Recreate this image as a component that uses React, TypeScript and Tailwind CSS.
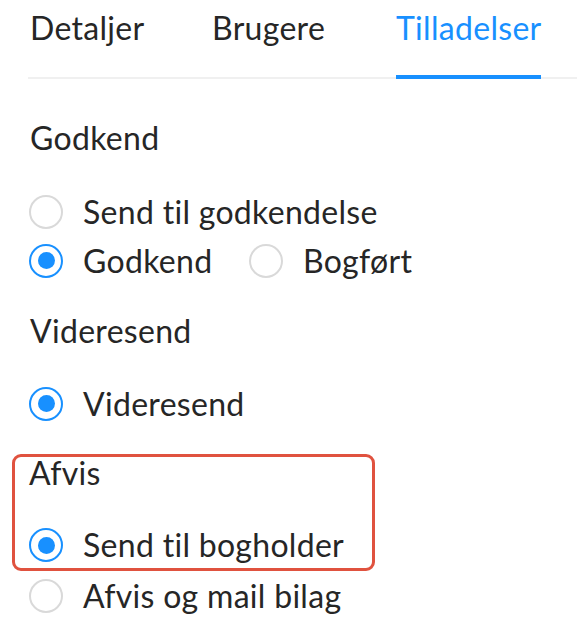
import React from "react";

function Radio({ checked, label, h = "h-[49px]" }: { checked?: boolean; label: string; h?: string }) {
  return (
    <div className={"flex items-center " + h}>
      <span
        className={
          "flex items-center justify-center w-[34px] h-[34px] rounded-full border-2 bg-white shrink-0 " +
          (checked ? "border-[#1890ff]" : "border-[#d9d9d9]")
        }
      >
        {checked && <span className="w-[17px] h-[17px] rounded-full bg-[#1890ff]" />}
      </span>
      <span className="ml-[20px] whitespace-nowrap">{label}</span>
    </div>
  );
}

export default function App() {
  return (
    <div
      className="w-[577px] h-[642px] bg-white text-[#262626] text-[32px] leading-[40px] tracking-[0.3px] overflow-hidden"
      style={{ fontFamily: "Lato, 'Noto Sans', sans-serif" }}
    >
      <div className="ml-[28px] flex border-b-2 border-[#f0f0f0] h-[79px]">
        <div className="pt-[8px] pl-[2px] w-[184px]">Detaljer</div>
        <div className="pt-[8px] w-[184px]">Brugere</div>
        <div className="pt-[8px] text-[#1890ff] border-b-[4px] border-[#1890ff] mb-[-2px] w-[145px] whitespace-nowrap">
          Tilladelser
        </div>
      </div>
      <div className="pl-[30px] pt-[39px]">Godkend</div>
      <div className="pl-[29px] pt-[29px]">
        <Radio label="Send til godkendelse" />
        <div className="flex">
          <div className="w-[220px]">
            <Radio checked label="Godkend" />
          </div>
          <Radio label="Bogført" />
        </div>
      </div>
      <div className="pl-[30px] pt-[26px]">Videresend</div>
      <div className="pl-[29px] pt-[28px]">
        <Radio checked label="Videresend" />
      </div>
      <div className="ml-[12px] mt-[26px] w-[363px] rounded-[9px] border-[3px] border-[#e0523f] pl-[14px]">
        <div className="leading-[32px]">Afvis</div>
        <div className="pt-[33px]">
          <Radio checked label="Send til bogholder" h="h-[46px]" />
        </div>
      </div>
      <div className="pl-[29px]">
        <Radio label="Afvis og mail bilag" />
      </div>
    </div>
  );
}
